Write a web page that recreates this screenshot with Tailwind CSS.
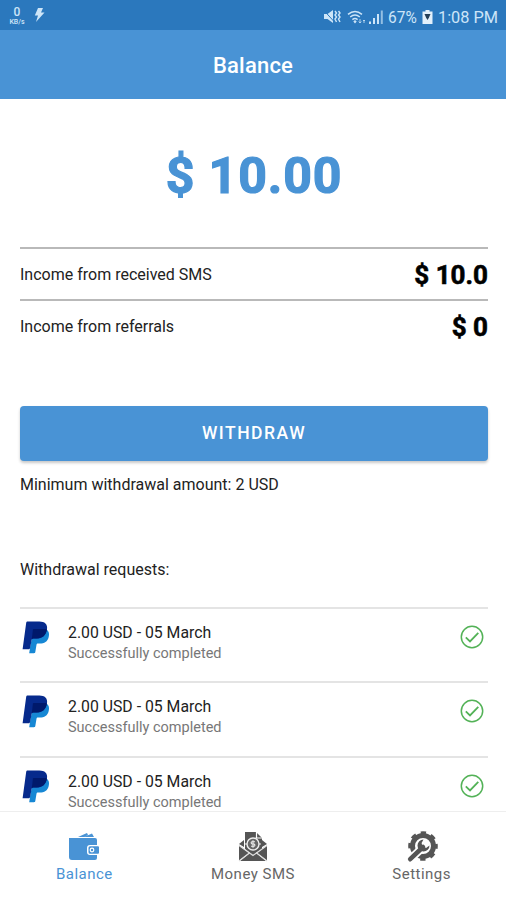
<!DOCTYPE html>
<html lang="en">
<head>
<meta charset="utf-8">
<title>Balance</title>
<script src="https://cdn.jsdelivr.net/npm/@tailwindcss/browser@4"></script>
</head>
<body class="bg-white font-['Roboto',sans-serif] text-[#222]">
<svg class="hidden">
  <symbol id="paypal" viewBox="0 0 28 33">
    <path fill="#1687d4" d="M24.5 8.5c2.6 1.7 3 4.3 2.2 7.4-1.2 4.7-4.3 6.6-9 6.6h-1.8c-.8 0-1.2.5-1.4 1.3l-1.2 7.2c-.1.8-.6 1.2-1.4 1.2H7.2l1-6.8 2-10z"/>
    <path fill="#062a8c" d="M5.6.4h11.8c5.2 0 8.4 2.7 7.6 7.8-.8 6-4.6 9.3-10.4 9.3h-3.3c-1 0-1.5.5-1.7 1.5l-1.5 8.1c-.1.7-.5 1.1-1.2 1.1H.6L4.2 1.7C4.4.8 4.8.4 5.6.4z"/>
    <path fill="#00196b" d="M11.6 8.1h10.7c1 0 1.8.1 2.6.5-.8 5.8-4.7 8.9-10.3 8.9h-3.3c-.7 0-1.2.3-1.5.9l1-9c.1-.8.2-1.1.8-1.3z"/>
  </symbol>
  <symbol id="done" viewBox="0 0 24 24">
    <g fill="none" stroke="#53b257" stroke-width="1.5"><circle cx="12" cy="12" r="10.7"/><path stroke-width="1.8" d="M5.8 12.400l4.200 4 8.300-8.600"/></g>
  </symbol>
</svg>
<div class="flex h-[900px] w-[506px] flex-col overflow-hidden">
  <header class="shrink-0">
    <div class="flex h-[30px] items-center justify-between bg-[#2b78bd] pr-[8px] pl-[8px] text-[#cde5f8]">
      <div class="flex items-center gap-[8px]">
        <div class="flex w-[18px] flex-col items-center pt-[2px]">
          <span class="text-[12px] leading-[12px] font-medium">0</span>
          <span class="text-[7px] leading-[8px] font-medium">KB/s</span>
        </div>
        <svg class="h-[16px] w-[11px]" viewBox="0 0 11 16" fill="currentColor"><path d="M4 1h5L7 5.500h3.500L2 15l2-6.500H.8z"/></svg>
      </div>
      <div class="flex items-center pt-[3px]">
        <svg class="mr-[6px] h-[16px] w-[18px]" viewBox="0 0 18 16" fill="currentColor"><path d="M1 5h3.500L10 1v13l-5.500-4H1z"/><path d="M1 1.500l10 11" stroke="#2b78bd" stroke-width="1"/><path d="M12 2l1.500 2L12 6l1.500 2L12 10l1.500 3M15.500 2L17 4l-1.500 2L17 8l-1.500 2 1.500 3" fill="none" stroke="currentColor" stroke-width="1.400"/></svg>
        <svg class="mr-[2px] h-[16px] w-[19px]" viewBox="0 0 19 16" fill="none" stroke="currentColor" stroke-width="1.500"><path d="M1 5.300q7-5.600 14 0M3.200 8q4.800-3.800 9.600 0M5.400 10.600q2.600-2 5.200 0"/><path d="M8 11l-1.700 1.500L8 14.500l1.700-2z" fill="currentColor" stroke="none"/><path d="M13 10v4m-1.300-1.500L13 14l1.300-1.500M17 14v-3m-1 1l1-1 1 1" stroke-width=".8"/></svg>
        <svg class="mr-[4px] h-[16px] w-[16px]" viewBox="0 0 16 16" fill="currentColor"><path d="M1 12.500h2V15H1zM5 9h2v6H5zM9 5h2v10H9z"/><path d="M12.800 1.500h2V15h-2z" opacity=".65"/></svg>
        <span class="inline-block w-[30px] text-[17px] leading-[18px] whitespace-nowrap"><span class="inline-block origin-left scale-x-[0.91]">67%</span></span>
        <svg class="mr-[5px] ml-[4px] h-[16px] w-[11px]" viewBox="0 0 10 16"><path fill="#e2f0fb" d="M3 1h4v1.500h3V15H0V2.500h3z"/><path fill="#243f58" d="M2 5h6L6.500 8.500 5 11 3.500 8.500z"/></svg>
        <span class="inline-block w-[60px] text-[17px] leading-[18px] whitespace-nowrap"><span class="inline-block origin-left scale-x-[0.96]">1:08 PM</span></span>
      </div>
    </div>
    <h1 class="flex h-[69px] items-center justify-center bg-[#4993d5] pt-[2px] text-[22px] font-medium tracking-[0.2px] text-white">Balance</h1>
  </header>
  <main class="min-h-0 flex-1 overflow-hidden pr-[18px] pl-[20px]">
    <div class="flex h-[148px] items-center justify-center pt-[6px] text-[50px] font-bold tracking-[0.9px] text-[#4993d5] [-webkit-text-stroke:1.2px_#4993d5]">$ 10.00</div>
    <dl>
      <div class="flex h-[52px] items-center justify-between border-t-2 border-[#b9b9b9] pt-[2px]">
        <dt class="text-[16px]">Income from received SMS</dt><dd class="text-[26px] leading-none font-bold text-black [-webkit-text-stroke:0.6px_#000]">$ 10.0</dd>
      </div>
      <div class="flex h-[53px] items-center justify-between border-t-2 border-[#b9b9b9] pt-[1px]">
        <dt class="text-[16px]">Income from referrals</dt><dd class="text-[26px] leading-none font-bold text-black [-webkit-text-stroke:0.6px_#000]">$ 0</dd>
      </div>
    </dl>
    <button class="mt-[54px] flex h-[55px] w-full items-center justify-center rounded-[4px] bg-[#4993d5] text-[17.5px] font-medium tracking-[1.500px] text-white shadow-[0_2px_3px_rgba(0,0,0,0.22)]">WITHDRAW</button>
    <p class="mt-[12px] text-[16px] leading-[24px]">Minimum withdrawal amount: 2 USD</p>
    <p class="mt-[61px] text-[16px] leading-[24px]">Withdrawal requests:</p>
    <ul class="mt-[25px]">
      <li class="flex h-[74px] border-t-2 border-[#e4e4e4] pt-[12px]">
        <svg class="ml-[2px] h-[33px] w-[28px]"><use href="#paypal"/></svg>
        <div class="ml-[18px] flex-1"><p class="text-[15.8px] leading-[24px]">2.00 USD - 05 March</p><p class="text-[14.500px] leading-[18px] text-[#777]">Successfully completed</p></div>
        <svg class="mt-[4px] mr-[4px] h-[24px] w-[24px]"><use href="#done"/></svg>
      </li>
      <li class="flex h-[75px] border-t-2 border-[#e4e4e4] pt-[12px]">
        <svg class="ml-[2px] h-[33px] w-[28px]"><use href="#paypal"/></svg>
        <div class="ml-[18px] flex-1"><p class="text-[15.8px] leading-[24px]">2.00 USD - 05 March</p><p class="text-[14.500px] leading-[18px] text-[#777]">Successfully completed</p></div>
        <svg class="mt-[4px] mr-[4px] h-[24px] w-[24px]"><use href="#done"/></svg>
      </li>
      <li class="flex h-[75px] border-t-2 border-[#e4e4e4] pt-[12px]">
        <svg class="ml-[2px] h-[33px] w-[28px]"><use href="#paypal"/></svg>
        <div class="ml-[18px] flex-1"><p class="text-[15.8px] leading-[24px]">2.00 USD - 05 March</p><p class="text-[14.500px] leading-[18px] text-[#777]">Successfully completed</p></div>
        <svg class="mt-[4px] mr-[4px] h-[24px] w-[24px]"><use href="#done"/></svg>
      </li>
    </ul>
  </main>
  <nav class="grid h-[89px] shrink-0 grid-cols-3 border-t border-[#eeeeee] bg-white text-[15px] leading-[20px] text-[#666]">
    <a class="flex flex-col items-center pt-[19px] text-[#4993d5]">
      <svg class="h-[32px] w-[32px]" viewBox="0 0 32 32" fill="currentColor"><path d="M10 6l9-4 1 2-4 2zM16 6l8-3.500 2 3.500z"/><path d="M2 7h25a2 2 0 0 1 2 2v5h-7a3 3 0 0 0-3 3v4a3 3 0 0 0 3 3h7v3a2 2 0 0 1-2 2H4a3 3 0 0 1-3-3V7z"/><path d="M22 15.200h8a1 1 0 0 1 1 1v5.600a1 1 0 0 1-1 1h-8a1.500 1.500 0 0 1-1.500-1.500v-4.600a1.500 1.500 0 0 1 1.500-1.500z"/><circle cx="24" cy="19" r="1.800" fill="none" stroke="#fff" stroke-width="1.200"/></svg>
      <span class="mt-[1px] tracking-[0.5px]">Balance</span>
    </a>
    <a class="flex flex-col items-center pt-[19px]">
      <svg class="h-[32px] w-[32px]" viewBox="0 0 32 32" fill="#555"><path d="M8 1h11l6 6v11l-9 6-8-6z"/><path d="M19.500 1v6h6" fill="none" stroke="#fff" stroke-width="1.200"/><path d="M2 13l5-4v7zM30 13l-5-4v7zM2 14.500l10 7.500L2 29.500zM30 14.500L20 22l10 7.500zM3 30l10-8 3 2 3-2 10 8z"/><path d="M2 14.500l14 10 14-10M2 30l11-8.500M30 30l-11-8.500" fill="none" stroke="#ddd" stroke-width="1.100"/><circle cx="16" cy="13" r="6" fill="#666" stroke="#eee" stroke-width="1.400"/><path d="M18 10.700h-3a1.200 1.200 0 0 0 0 2.300h2a1.200 1.200 0 0 1 0 2.300h-3M16 9.300v7.400M8 13h2M22 13h2" fill="none" stroke="#eee" stroke-width="1.100"/></svg>
      <span class="mt-[1px] tracking-[0.5px]">Money SMS</span>
    </a>
    <a class="flex flex-col items-center pt-[19px]">
      <svg class="h-[32px] w-[32px]" viewBox="0 0 32 32"><g fill="none" stroke="#555"><circle cx="17" cy="15" r="10.500" stroke-width="5"/><circle cx="17" cy="15" r="13" stroke-width="3.600" stroke-dasharray="5.200 5.010" stroke-dashoffset="2.600"/></g><path d="M2.500 30L16 17" stroke="#fff" stroke-width="8"/><path d="M4.200 28.200L17 16" stroke="#555" stroke-width="4.600" stroke-linecap="round"/><path fill="#555" d="M17.500 8.500a6 6 0 1 0 6 6L20 17l-3.600-1.400-.8-3.600z"/></svg>
      <span class="mt-[1px] tracking-[0.5px]">Settings</span>
    </a>
  </nav>
</div>
</body>
</html>
